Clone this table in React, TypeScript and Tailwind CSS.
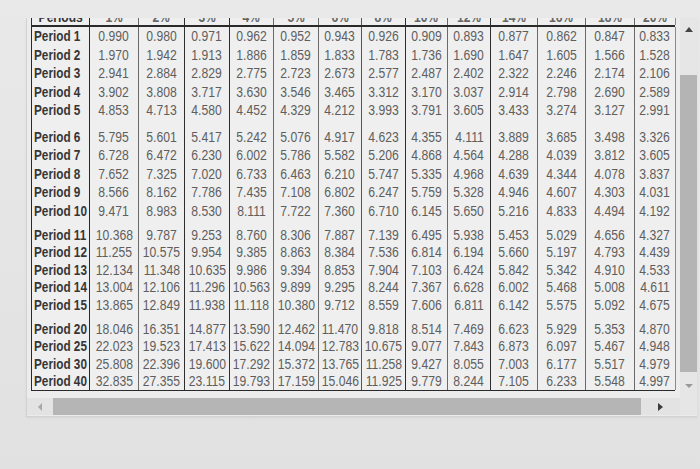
const headers = ['Periods', '1%', '2%', '3%', '4%', '5%', '6%', '8%', '10%', '12%', '14%', '16%', '18%', '20%']

// darker rule after Period, 2%, 3%, 8% and 12%
const colBorder = [
  'border-r border-[#2a2a2a]',
  'border-r border-[#6a6a6a]',
  'border-r border-[#2e2e2e]',
  'border-r border-[#2e2e2e]',
  'border-r border-[#6a6a6a]',
  'border-r border-[#6a6a6a]',
  'border-r border-[#555555]',
  'border-r border-[#2e2e2e]',
  'border-r border-[#6a6a6a]',
  'border-r border-[#2e2e2e]',
  'border-r border-[#6a6a6a]',
  'border-r border-[#6a6a6a]',
  'border-r border-[#6a6a6a]',
  'border-r border-[#8a8a8a]',
]

const cols = 'grid grid-cols-[58px_49px_46px_45px_44px_45px_43px_44px_42px_43px_47px_48px_49px_41px]'

const groups: { gap: string; rowH: string; rows: [string, string[]][] }[] = [
  {
    gap: 'h-0',
    rowH: 'h-[18.5px]',
    rows: [
      ['Period 1', ['0.990', '0.980', '0.971', '0.962', '0.952', '0.943', '0.926', '0.909', '0.893', '0.877', '0.862', '0.847', '0.833']],
      ['Period 2', ['1.970', '1.942', '1.913', '1.886', '1.859', '1.833', '1.783', '1.736', '1.690', '1.647', '1.605', '1.566', '1.528']],
      ['Period 3', ['2.941', '2.884', '2.829', '2.775', '2.723', '2.673', '2.577', '2.487', '2.402', '2.322', '2.246', '2.174', '2.106']],
      ['Period 4', ['3.902', '3.808', '3.717', '3.630', '3.546', '3.465', '3.312', '3.170', '3.037', '2.914', '2.798', '2.690', '2.589']],
      ['Period 5', ['4.853', '4.713', '4.580', '4.452', '4.329', '4.212', '3.993', '3.791', '3.605', '3.433', '3.274', '3.127', '2.991']],
    ],
  },
  {
    gap: 'h-[8px]',
    rowH: 'h-[18.5px]',
    rows: [
      ['Period 6', ['5.795', '5.601', '5.417', '5.242', '5.076', '4.917', '4.623', '4.355', '4.111', '3.889', '3.685', '3.498', '3.326']],
      ['Period 7', ['6.728', '6.472', '6.230', '6.002', '5.786', '5.582', '5.206', '4.868', '4.564', '4.288', '4.039', '3.812', '3.605']],
      ['Period 8', ['7.652', '7.325', '7.020', '6.733', '6.463', '6.210', '5.747', '5.335', '4.968', '4.639', '4.344', '4.078', '3.837']],
      ['Period 9', ['8.566', '8.162', '7.786', '7.435', '7.108', '6.802', '6.247', '5.759', '5.328', '4.946', '4.607', '4.303', '4.031']],
      ['Period 10', ['9.471', '8.983', '8.530', '8.111', '7.722', '7.360', '6.710', '6.145', '5.650', '5.216', '4.833', '4.494', '4.192']],
    ],
  },
  {
    gap: 'h-[6px]',
    rowH: 'h-[17.5px]',
    rows: [
      ['Period 11', ['10.368', '9.787', '9.253', '8.760', '8.306', '7.887', '7.139', '6.495', '5.938', '5.453', '5.029', '4.656', '4.327']],
      ['Period 12', ['11.255', '10.575', '9.954', '9.385', '8.863', '8.384', '7.536', '6.814', '6.194', '5.660', '5.197', '4.793', '4.439']],
      ['Period 13', ['12.134', '11.348', '10.635', '9.986', '9.394', '8.853', '7.904', '7.103', '6.424', '5.842', '5.342', '4.910', '4.533']],
      ['Period 14', ['13.004', '12.106', '11.296', '10.563', '9.899', '9.295', '8.244', '7.367', '6.628', '6.002', '5.468', '5.008', '4.611']],
      ['Period 15', ['13.865', '12.849', '11.938', '11.118', '10.380', '9.712', '8.559', '7.606', '6.811', '6.142', '5.575', '5.092', '4.675']],
    ],
  },
  {
    gap: 'h-[6.5px]',
    rowH: 'h-[17.5px]',
    rows: [
      ['Period 20', ['18.046', '16.351', '14.877', '13.590', '12.462', '11.470', '9.818', '8.514', '7.469', '6.623', '5.929', '5.353', '4.870']],
      ['Period 25', ['22.023', '19.523', '17.413', '15.622', '14.094', '12.783', '10.675', '9.077', '7.843', '6.873', '6.097', '5.467', '4.948']],
      ['Period 30', ['25.808', '22.396', '19.600', '17.292', '15.372', '13.765', '11.258', '9.427', '8.055', '7.003', '6.177', '5.517', '4.979']],
      ['Period 40', ['32.835', '27.355', '23.115', '19.793', '17.159', '15.046', '11.925', '9.779', '8.244', '7.105', '6.233', '5.548', '4.997']],
    ],
  },
]

const font = { fontFamily: '"Liberation Sans", Arial, sans-serif' }

const Spacer = ({ h }: { h: string }) => (
  <div className={`${cols} ${h} border-l border-[#2a2a2a]`}>
    {headers.map((hd, i) => (
      <div key={hd} className={colBorder[i]} />
    ))}
  </div>
)

const App = () => {
  return (
    <div className="w-[700px] h-[469px] overflow-hidden bg-gradient-to-b from-[#e9e9e9] to-[#e1e1e1] pt-[18px] pl-[26px]" style={font}>
      <div className="w-[671px] h-[399px] flex flex-col bg-[#ececec] border-l border-b border-[#d2d2d2] shadow-[0_1px_2px_rgba(0,0,0,0.06)]">
        <div className="flex h-[380px]">
          {/* table viewport */}
          <div className="flex-1 overflow-hidden pl-[4px]">
            <div className="-mt-[14px] w-[644px] bg-[#efefef]">
              <div className={`${cols} h-[23px] border-l border-b-2 border-[#2a2a2a]`}>
                {headers.map((hd, i) => (
                  <div
                    key={hd}
                    className={`${colBorder[i]} flex items-end justify-center pb-[1px] text-[14px] font-bold leading-none ${i === 0 ? 'text-[#333]' : 'text-[#666]'}`}
                  >
                    <span className="inline-block scale-x-[0.86]">{hd}</span>
                  </div>
                ))}
              </div>
              {groups.map((g, gi) => (
                <div key={gi}>
                  {gi > 0 && <Spacer h={g.gap} />}
                  {g.rows.map(([label, vals]) => (
                    <div key={label} className={`${cols} ${g.rowH} border-l border-[#2a2a2a]`}>
                      <div className={`${colBorder[0]} flex items-center pl-[2px] text-[14px] font-bold text-[#363636] leading-none whitespace-nowrap`}>
                        <span className="inline-block origin-left scale-x-[0.84]">{label}</span>
                      </div>
                      {vals.map((v, i) => (
                        <div
                          key={i}
                          className={`${colBorder[i + 1]} flex items-center justify-center text-[14px] text-[#5e5e5e] leading-none whitespace-nowrap`}
                        >
                          <span className="inline-block scale-x-[0.87]">{v}</span>
                        </div>
                      ))}
                    </div>
                  ))}
                </div>
              ))}
              <div className="h-px bg-[#2a2a2a]" />
            </div>
          </div>
          {/* vertical scrollbar */}
          <div className="w-[17px] flex flex-col items-stretch bg-[#e6e6e6]">
            <div className="h-[57px] flex justify-center pt-[9px]">
              <div className="w-0 h-0 border-l-[4px] border-r-[4px] border-b-[5px] border-l-transparent border-r-transparent border-b-[#444]" />
            </div>
            <div className="h-[297px] bg-[#b4b4b4]" />
            <div className="flex-1 flex justify-center pt-[12px]">
              <div className="w-0 h-0 border-l-[4px] border-r-[4px] border-t-[4px] border-l-transparent border-r-transparent border-t-[#9a9a9a]" />
            </div>
          </div>
        </div>
        {/* horizontal scrollbar */}
        <div className="flex h-[17px]">
          <div className="flex-1 flex items-center bg-[#e3e3e3]">
            <div className="w-[26px] flex justify-center">
              <div className="w-0 h-0 border-t-[4px] border-b-[4px] border-r-[4px] border-t-transparent border-b-transparent border-r-[#a8a8a8]" />
            </div>
            <div className="w-[588px] h-[17px] bg-[#b5b5b5]" />
            <div className="flex-1 flex justify-center">
              <div className="w-0 h-0 border-t-[4px] border-b-[4px] border-l-[5px] border-t-transparent border-b-transparent border-l-[#3c3c3c]" />
            </div>
          </div>
          <div className="w-[17px] bg-[#e6e6e6]" />
        </div>
      </div>
    </div>
  )
}

export default App
